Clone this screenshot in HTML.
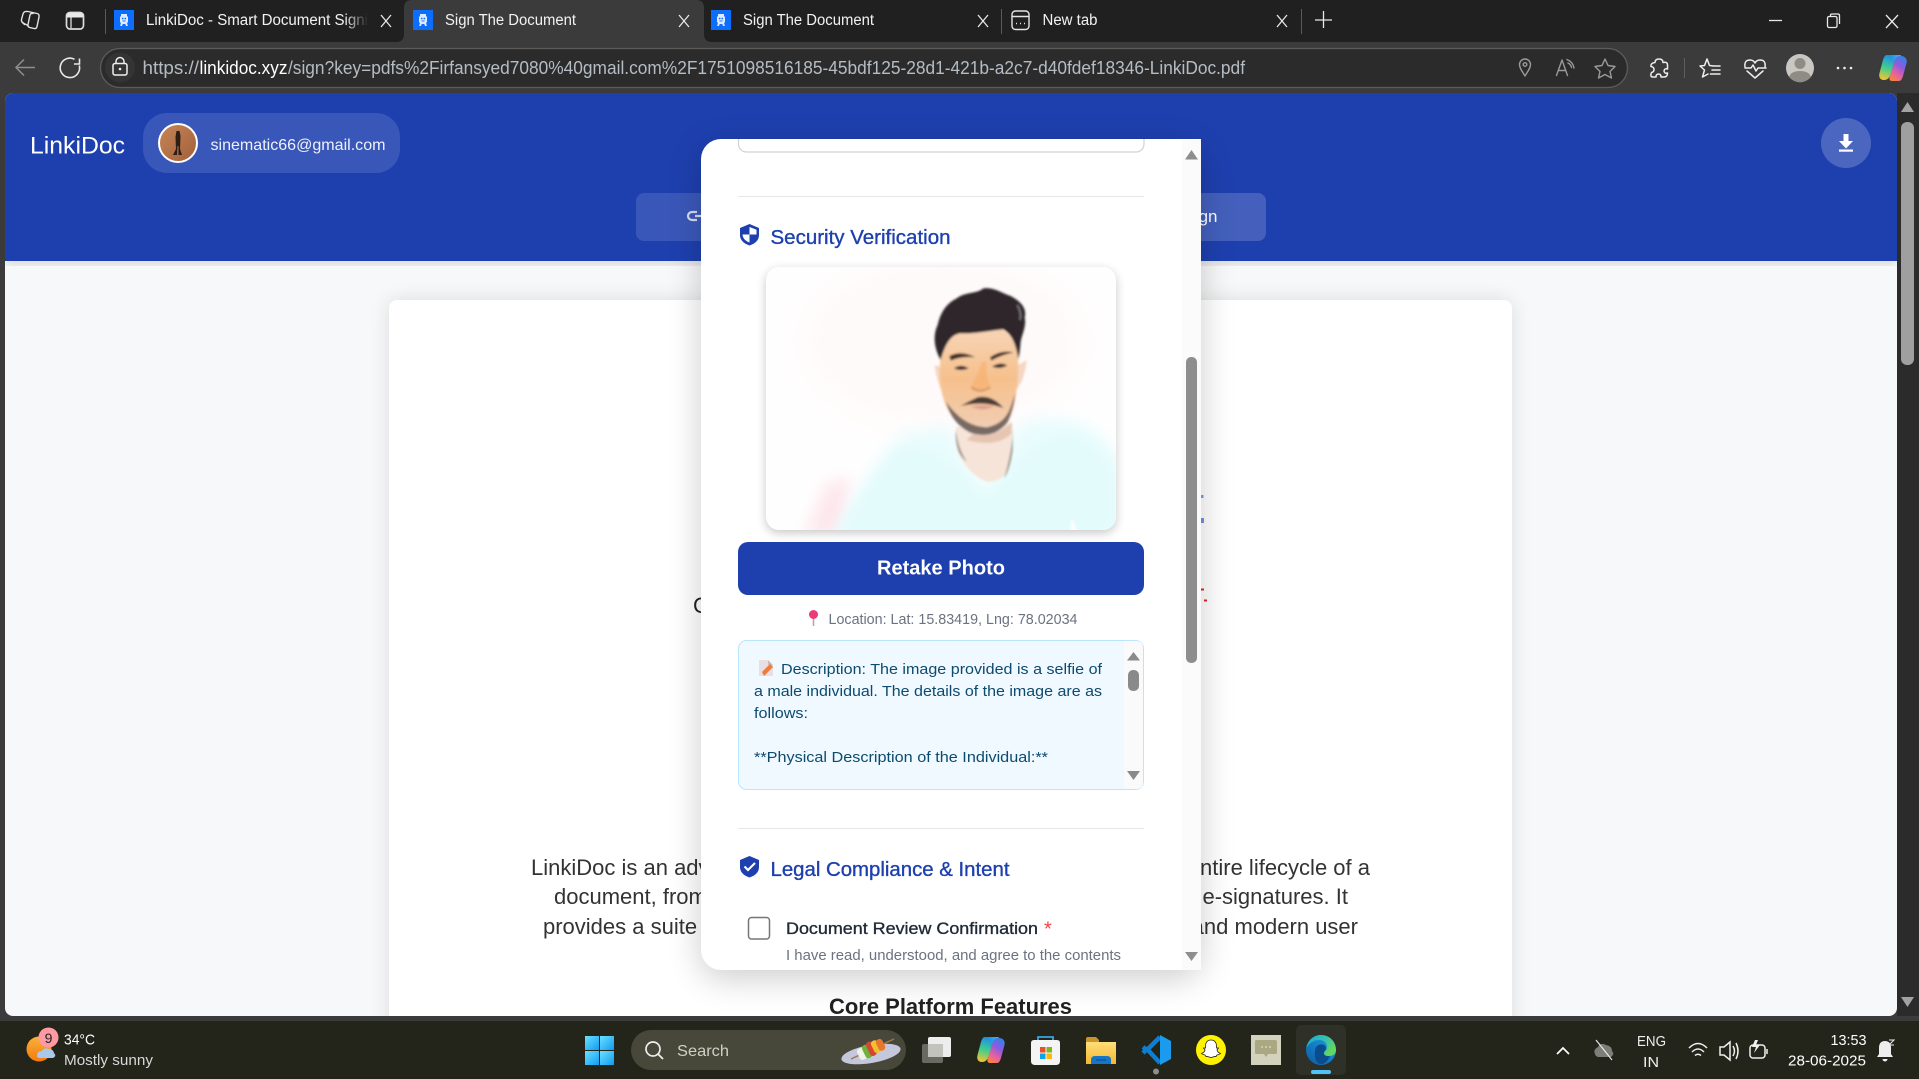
<!DOCTYPE html>
<html lang="en"><head><meta charset="utf-8"><title>Sign The Document</title>
<style>
html,body{margin:0;padding:0;width:1919px;height:1079px;background:#202020;overflow:hidden}
svg{display:block}
text{font-family:"Liberation Sans",Arial,sans-serif;white-space:pre}
.ic{fill:none;stroke:#e4e4e4;stroke-width:1.4;stroke-linecap:round;stroke-linejoin:round}
.tab{font-size:15.5px;fill:#f2f2f2}
.mid{stroke-width:.35px}
</style></head><body>
<svg width="1919" height="1079" viewBox="0 0 1919 1079" xmlns="http://www.w3.org/2000/svg">
<defs>
<filter id="b25" x="-30%" y="-30%" width="160%" height="160%"><feGaussianBlur stdDeviation="17"/></filter>
<filter id="b6" x="-10%" y="-10%" width="120%" height="120%"><feGaussianBlur stdDeviation="5"/></filter>
<filter id="b1" x="-10%" y="-10%" width="120%" height="120%"><feGaussianBlur stdDeviation="3"/></filter>
<filter id="b8" x="-30%" y="-30%" width="160%" height="160%"><feGaussianBlur stdDeviation="10"/></filter>
<filter id="b12" x="-30%" y="-30%" width="160%" height="160%"><feGaussianBlur stdDeviation="14"/></filter>
<filter id="b22" x="-50%" y="-50%" width="200%" height="200%"><feGaussianBlur stdDeviation="24"/></filter>
<filter id="b50" x="-40%" y="-40%" width="180%" height="180%"><feGaussianBlur stdDeviation="60"/></filter>
<clipPath id="page"><rect x="5" y="93" width="1892" height="923" rx="8"/></clipPath>
<clipPath id="photo"><rect x="766" y="267" width="350" height="263" rx="13"/></clipPath>
<linearGradient id="fade" gradientUnits="userSpaceOnUse" x1="345" x2="368" y1="0" y2="0"><stop offset="0" stop-color="#f2f2f2"/><stop offset="1" stop-color="#f2f2f2" stop-opacity="0"/></linearGradient>
<linearGradient id="cpA" x1=".5" y1="0" x2=".3" y2="1"><stop offset="0" stop-color="#1f8fe8"/><stop offset=".5" stop-color="#3fce8e"/><stop offset="1" stop-color="#f5c531"/></linearGradient>
<linearGradient id="cpB" x1=".7" y1="0" x2=".2" y2="1"><stop offset="0" stop-color="#3a7fe8"/><stop offset=".35" stop-color="#8a5be0"/><stop offset=".7" stop-color="#e9609f"/><stop offset="1" stop-color="#f7853b"/></linearGradient>
<linearGradient id="cpC" x1="0" y1="0" x2="1" y2="0"><stop offset="0" stop-color="#1a80e0"/><stop offset="1" stop-color="#39bdf0"/></linearGradient>
<linearGradient id="edgeA" x1="0" y1="1" x2=".8" y2="0"><stop offset="0" stop-color="#0c59a4"/><stop offset="1" stop-color="#1b9de2"/></linearGradient>
<linearGradient id="edgeB" x1="0" y1="0" x2="1" y2=".6"><stop offset="0" stop-color="#1ba5d8"/><stop offset=".55" stop-color="#35c1b0"/><stop offset="1" stop-color="#66d75c"/></linearGradient>
<linearGradient id="start" x1="0" y1="0" x2="1" y2="1"><stop offset="0" stop-color="#6ce0ff"/><stop offset="1" stop-color="#0f9cf0"/></linearGradient>
<linearGradient id="sun" x1="0" y1="0" x2="0" y2="1"><stop offset="0" stop-color="#f9b13a"/><stop offset="1" stop-color="#f47a10"/></linearGradient>
<linearGradient id="fold" x1="0" y1="0" x2="0" y2="1"><stop offset="0" stop-color="#ffdf7a"/><stop offset="1" stop-color="#f6b52c"/></linearGradient>
<linearGradient id="avatar" x1="0" y1="0" x2="1" y2="1"><stop offset="0" stop-color="#c78658"/><stop offset="1" stop-color="#a15f3a"/></linearGradient>
<linearGradient id="skin" x1="0" y1="0" x2="0" y2="1"><stop offset="0" stop-color="#f8d6ba"/><stop offset=".5" stop-color="#f6c08c"/><stop offset="1" stop-color="#f1cfb8"/></linearGradient>
<linearGradient id="btn" x1="0" y1="0" x2="1" y2="0"><stop offset="0" stop-color="#fff" stop-opacity=".12"/><stop offset="1" stop-color="#fff" stop-opacity=".17"/></linearGradient>
<g id="fav"><rect width="20" height="20" fill="#0d6efd"/><path d="M7 4h6v2.500h1v6h-1l.8 3.500h-1.800l-.7-2H8.700L8 16H6.200L7 12.500H6v-6h1z" fill="#dfeaff"/><circle cx="8.700" cy="8.500" r=".9" fill="#0d6efd"/><circle cx="11.300" cy="8.500" r=".9" fill="#0d6efd"/><rect x="8.500" y="10.500" width="3" height=".9" fill="#0d6efd"/></g>
<g id="x"><path d="M-5 -6 5 6M5 -6 -5 6" stroke="#e8e8e8" stroke-width="1.300" fill="none"/></g>
<g id="copilot">
<path d="M8 0H14C17 0 17 3 16 5L12 18C11 22 9 25 5 25C1 25 -.5 22 .5 18L4 5C5 2 6 0 8 0Z" fill="url(#cpA)"/>
<path d="M20 26H13C10 26 10 23 11 21L15 8C16 4 18 1 22 1C26 1 28.500 4 27.500 8L24 21C23 24 22 26 20 26Z" fill="url(#cpB)"/>
<path d="M8 0H20C21.500 0 22.500 .5 22 1C18 1 16 4 15 8L13.500 9.500C15 5 13 1.500 8 0Z" fill="url(#cpC)"/>
</g>
</defs>

<!-- window chrome -->
<rect width="1919" height="42" fill="#202020"/>
<rect y="42" width="1919" height="980" fill="#3b3b3b"/>
<path d="M396 42Q404 42 404 34V8Q404 0 412 0H696Q704 0 704 8V34Q704 42 712 42Z" fill="#3b3b3b"/>

<!-- tab strip icons -->
<g class="ic" stroke-width="1.500">
<path d="M28 11.500 37 13.500Q39.500 14 39 17L37 26.500Q36.500 29 34 28.500L30 27.600Q27.500 27 28 24.500L30 15Q30.500 13 33 13.500"/>
<path d="M28 25.500 24 23.500Q21 22 21.500 19.500L23 14Q24 11 27 11.500"/>
<path d="M24.500 24.500 22.500 22.500"/>
<rect x="66.500" y="12.500" width="17" height="16.500" rx="3.500" stroke="#dcdcdc" stroke-width="1.700"/>
</g>
<path d="M67 16Q67 13 70 13H80Q83 13 83 16V17.500H67Z" fill="#e8e8e8"/>
<path d="M71 17.500V28" stroke="#dcdcdc" stroke-width="1.300"/>
<path d="M105.500 9V34" stroke="#5a5a5a"/>

<use href="#fav" x="114" y="10"/>
<text class="tab" x="146" y="25" textLength="222" lengthAdjust="spacingAndGlyphs" style="fill:url(#fade)">LinkiDoc - Smart Document Signi</text>
<use href="#x" x="386" y="21"/>
<use href="#fav" x="413" y="10"/>
<text class="tab" x="445" y="25" textLength="131" lengthAdjust="spacingAndGlyphs">Sign The Document</text>
<use href="#x" x="684" y="21"/>
<use href="#fav" x="711" y="10"/>
<text class="tab" x="743" y="25" textLength="131" lengthAdjust="spacingAndGlyphs">Sign The Document</text>
<use href="#x" x="983" y="21"/>
<path d="M1001.500 9V34" stroke="#5a5a5a"/>
<rect x="1012" y="11" width="17" height="18.500" rx="3.500" class="ic"/>
<path d="M1012 16.500H1029" class="ic"/>
<path d="M1016 23.500H1017M1020 23.500H1021M1024 23.500H1025" stroke="#e4e4e4" stroke-width="1.600"/>
<text class="tab" x="1042.500" y="25" textLength="55" lengthAdjust="spacingAndGlyphs">New tab</text>
<use href="#x" x="1282" y="21"/>
<path d="M1301.500 9V34" stroke="#5a5a5a"/>
<path d="M1323.500 11V28M1315 20H1332" stroke="#e8e8e8" stroke-width="1.300"/>
<path d="M1769 20.500H1782" stroke="#e8e8e8" stroke-width="1.300"/>
<rect x="1827.500" y="16.500" width="9.500" height="11" rx="1.500" fill="none" stroke="#e8e8e8" stroke-width="1.300"/>
<path d="M1830.500 16V15Q1830.500 14 1832 14H1838Q1839.500 14 1839.500 15.500V24" fill="none" stroke="#e8e8e8" stroke-width="1.300"/>
<path d="M1886 15 1898 28M1898 15 1886 28" stroke="#e8e8e8" stroke-width="1.300"/>

<!-- toolbar -->
<path d="M35 67.500H16M24 59.500 16 67.500 24 75.500" fill="none" stroke="#8e8e8e" stroke-width="1.500"/>
<path d="M79.300 65.500A9.700 9.700 0 1 1 74.500 59.300" fill="none" stroke="#e8e8e8" stroke-width="1.600"/>
<path d="M79.500 58.500V64H74" fill="none" stroke="#e8e8e8" stroke-width="1.600"/>
<rect x="100.500" y="48.500" width="1527" height="39" rx="19.500" fill="#2b2b2b" stroke="#5c5c5c" stroke-width="1.300"/>
<circle cx="120" cy="67.500" r="15" fill="#343434"/>
<rect x="113" y="63.500" width="14" height="11.500" rx="2" fill="none" stroke="#eee" stroke-width="1.500"/>
<path d="M116 63.500V61.500A4 4 0 0 1 124 61.500V63.500" fill="none" stroke="#eee" stroke-width="1.500"/>
<circle cx="120" cy="69" r="1.300" fill="#eee"/>
<text x="142.500" y="74" font-size="18" fill="#b5bcc4" textLength="56.500" lengthAdjust="spacingAndGlyphs">https://</text>
<text x="199.500" y="74" font-size="18" fill="#fff" textLength="88" lengthAdjust="spacingAndGlyphs">linkidoc.xyz</text>
<text x="288" y="74" font-size="18" fill="#b5bcc4" textLength="957" lengthAdjust="spacingAndGlyphs">/sign?key=pdfs%2Firfansyed7080%40gmail.com%2F1751098516185-45bdf125-28d1-421b-a2c7-d40fdef18346-LinkiDoc.pdf</text>

<g fill="none" stroke="#9a9a9a" stroke-width="1.400" stroke-linejoin="round" stroke-linecap="round">
<path d="M1525 76C1522 71 1519.500 68 1519.500 64.500A5.500 5.500 0 0 1 1530.500 64.500C1530.500 68 1528 71 1525 76Z"/><circle cx="1525" cy="64.500" r="1.800"/>
<path d="M1556.500 75.500 1562 60 1567.500 75.500M1558.500 70.500H1565.500"/><path d="M1567 59.500Q1573 62 1574 68M1568 63Q1571 64.500 1571.500 67.500"/>
<path d="M1605 59 1608 65.500 1615 66.500 1610 71.500 1611.500 78 1605 74.500 1598.500 78 1600 71.500 1595 66.500 1602 65.500Z"/>
</g>
<g fill="none" stroke="#ededed" stroke-width="1.500" stroke-linejoin="round" stroke-linecap="round">
<path d="M1655 62.500Q1655 59 1659 59Q1663 59 1663 62.500Q1667.500 61.500 1667.500 65V69Q1664.500 68 1664 71Q1664.500 74 1667.500 73Q1667.500 77 1664 77H1661Q1661 74 1658.500 74Q1656 74 1656 77H1652Q1650 76 1651.500 72.500Q1654 72 1654 69.500Q1654 67 1651 66.500Q1650.500 63 1655 62.500Z"/>
<path d="M1707 59 1709.500 65.500 1714 66M1700 66 1704.500 65.500 1707 59M1700 66 1704.500 70 1702.500 77 1708 74M1713 66H1720M1712 70H1720M1710.500 74H1720"/>
<path d="M1745 67Q1744 60 1750 60Q1753.500 60 1755 63Q1756.500 60 1760 60Q1766 60 1765 67M1747 71 1755 78 1763 71M1745 68H1751L1753 65 1756 71 1758 68H1766"/>
</g>
<path d="M1684.500 58V78" stroke="#5e5e5e"/>
<circle cx="1800" cy="68" r="14" fill="#c9c7c2"/>
<circle cx="1800" cy="63.500" r="5.500" fill="#8f8c86"/>
<path d="M1789 77Q1791 71 1800 71Q1809 71 1811 77A14 14 0 0 1 1789 77Z" fill="#8f8c86"/>
<circle cx="1838" cy="68" r="1.300" fill="#eee"/><circle cx="1844.500" cy="68" r="1.300" fill="#eee"/><circle cx="1851" cy="68" r="1.300" fill="#eee"/>
<use href="#copilot" x="1879" y="55"/>

<!-- page -->
<g clip-path="url(#page)">
<rect x="5" y="93" width="1892" height="923" fill="#f7f8f9"/>
<rect x="5" y="255" width="1892" height="10" fill="#000" opacity=".12" filter="url(#b6)"/>
<rect x="389" y="300" width="1123" height="760" rx="8" fill="#000" opacity=".11" filter="url(#b8)"/>
<rect x="389" y="300" width="1123" height="760" rx="8" fill="#fff"/>

<text x="693" y="613" font-size="22" fill="#222">Certificate</text>
<rect x="1201" y="588.500" width="3" height="2" fill="#ef2020"/><rect x="1204" y="599.500" width="3" height="2" fill="#ef2020"/>
<rect x="1201" y="495" width="2.500" height="3" fill="#7f9fe3"/><rect x="1201" y="518" width="3" height="5" fill="#6f95df"/>

<g font-size="22" fill="#333">
<text x="531" y="875">LinkiDoc is an advanced</text>
<text x="554" y="904">document, from creation</text>
<text x="543" y="934">provides a suite of</text>
<text x="1370" y="875" text-anchor="end">the entire lifecycle of a</text>
<text x="1348" y="904" text-anchor="end">and e-signatures. It</text>
<text x="1358" y="934" text-anchor="end">and modern user</text>
</g>
<text x="829" y="1014" font-size="22" font-weight="700" fill="#222" textLength="243" lengthAdjust="spacingAndGlyphs">Core Platform Features</text>

<!-- header -->
<rect x="5" y="93" width="1892" height="168" fill="#1e40af"/>
<text x="30" y="153.500" font-size="24" fill="#fff" textLength="95" lengthAdjust="spacingAndGlyphs">LinkiDoc</text>
<rect x="143" y="113" width="257" height="60" rx="24" fill="#fff" opacity=".12"/>
<circle cx="178" cy="143" r="19" fill="url(#avatar)" stroke="#fff" stroke-width="2"/>
<path d="M176.500 131H179.500L180.500 136 180 149 182 155H178.500V146H177.500L177 155H173L176 149 175.500 137Z" fill="#2c1d16"/>
<text x="210.500" y="150" font-size="16" fill="#eef1fb" textLength="175" lengthAdjust="spacingAndGlyphs">sinematic66@gmail.com</text>
<circle cx="1846" cy="143" r="25" fill="#fff" opacity=".2"/>
<path d="M1843.500 134H1848.500V141H1853L1846 148.500 1839 141H1843.500Z" fill="#fff"/><rect x="1839" y="149.500" width="14" height="2.200" fill="#fff"/>
<rect x="636" y="193" width="630" height="48" rx="8" fill="url(#btn)"/>
<path d="M697 212H692A4 4 0 0 0 692 220H697M695 216H702" fill="none" stroke="#d5dcf2" stroke-width="2.200"/>
<text x="1217.500" y="222" font-size="17" fill="#fff" text-anchor="end">Sign</text>

<!-- modal shadow -->
<rect x="701" y="147" width="500" height="831" rx="20" fill="#000" opacity=".2" filter="url(#b25)"/>
</g>

<!-- modal -->
<path d="M721 139H1201V970H721A20 20 0 0 1 701 950V159A20 20 0 0 1 721 139Z" fill="#fff"/>
<rect x="1182" y="140" width="19" height="830" fill="#fbfbfb"/>
<path d="M1191.500 150 1198 159.500H1185Z" fill="#8e8e8e"/>
<rect x="1186" y="357" width="11" height="306" rx="5" fill="#8e8e8e"/>
<path d="M1185 952H1198L1191.500 961Z" fill="#8e8e8e"/>

<path d="M738.500 139V144A8 8 0 0 0 746.500 152H1136A8 8 0 0 0 1144 144V139" fill="none" stroke="#cfd2d7" stroke-width="1.200"/>
<rect x="738" y="196" width="406" height="1" fill="#e5e7eb"/>

<path d="M749.500 224 759 228V235C759 240 755.500 243.500 749.500 245.500C743.500 243.500 740 240 740 235V228Z" fill="#1e40af"/>
<path d="M749.500 227 756.500 229.800V234.500H749.500ZM749.500 234.500V242.500C745.500 241 742.800 238.500 742.500 234.500Z" fill="#fff"/>
<text x="770.500" y="244" class="mid" font-size="20" fill="#1e40af" stroke="#1e40af" textLength="180" lengthAdjust="spacingAndGlyphs">Security Verification</text>

<!-- selfie -->
<rect x="766" y="270" width="350" height="263" rx="13" fill="#000" opacity=".22" filter="url(#b6)"/>
<rect x="766" y="267" width="350" height="263" rx="13" fill="#fffefe"/>
<g clip-path="url(#photo)"><g transform="translate(770 270) scale(.33333)">
<ellipse cx="520" cy="220" rx="420" ry="260" fill="#fff6f6" opacity=".55" filter="url(#b50)"/>
<path d="M100 800 170 640 240 620 220 800Z" fill="#fde6ec" filter="url(#b22)"/>
<path d="M190 810C240 700 310 570 390 500C440 475 520 470 555 478C570 540 590 600 640 640C690 645 710 620 725 500C740 450 800 440 900 450C980 470 1030 520 1060 600V810Z" fill="#e8fcfd" filter="url(#b22)"/>
<path d="M195 800C245 720 320 600 395 530C470 520 560 560 640 680C720 600 800 480 900 490C980 510 1020 560 1040 640V800Z" fill="#e4fbfc" filter="url(#b12)"/>
<g filter="url(#b1)">
<path d="M905 745 925 790H900Z" fill="#fff"/>
<path d="M558 470 728 462 715 590Q700 638 650 635Q590 612 562 540Z" fill="#f6e4d8"/>
<path d="M610 490Q680 505 725 455V490Q680 535 590 510Z" fill="#e6c6b2"/>
<path d="M558 478Q562 530 590 575Q575 565 566 545Q554 510 558 478ZM728 470Q726 550 702 625Q720 600 728 540Z" fill="#9d948e"/>
<path d="M494 285 518 292 522 375Q500 340 494 285ZM770 270 745 285 738 360Q765 330 770 270Z" fill="#f6d6c2"/>
<path d="M510 280C505 350 520 410 555 450C590 495 680 505 715 455C735 420 745 340 745 280C745 220 720 165 640 165C550 165 515 220 510 280Z" fill="url(#skin)"/>
<path d="M635 275Q622 320 600 355Q625 378 665 355Q645 320 650 275Z" fill="#f6a862" opacity=".45"/>
<path d="M605 352Q630 372 660 352" fill="none" stroke="#c98a60" stroke-width="4"/>
<path d="M528 395Q545 460 600 488Q670 510 712 458Q730 420 736 370L722 410Q705 462 650 472Q580 470 528 395Z" fill="#635856" opacity=".85"/>
<path d="M572 408Q595 394 622 382Q640 378 660 384Q685 394 700 414Q665 402 635 401Q600 401 572 408Z" fill="#4b3a34"/>
<path d="M602 410Q640 402 672 410Q640 426 602 410Z" fill="#dd9f90"/>
<path d="M538 258Q575 240 615 262Q575 258 542 272ZM660 262Q695 238 730 248Q695 254 664 272Z" fill="#3f2e28"/>
<path d="M552 295Q572 280 596 295Q572 305 552 295ZM666 290Q690 274 712 286Q690 299 666 290Z" fill="#34272a"/>
<path d="M512 270C492 235 488 195 503 165C512 125 530 100 560 85C585 65 620 72 640 55C672 50 700 72 722 78C748 92 772 112 764 142C770 168 756 192 752 215C750 240 748 255 745 268C738 225 728 195 700 178C660 182 610 192 570 190C540 195 525 225 512 270Z" fill="#2f282b"/>
<path d="M742 105Q756 130 750 150" stroke="#8b8488" stroke-width="4" fill="none"/>
</g>
</g></g>

<rect x="738" y="542" width="406" height="53" rx="10" fill="#1e40af"/>
<text x="877" y="574.500" font-size="20" font-weight="700" fill="#fff" textLength="128" lengthAdjust="spacingAndGlyphs">Retake Photo</text>

<path d="M813.500 618V626" stroke="#b3a9ad" stroke-width="1.600"/>
<circle cx="813.500" cy="614.500" r="4.500" fill="#ec3b76"/>
<path d="M809.500 612 813.500 619 817.500 612Z" fill="#ec3b76"/>
<text x="828.500" y="624" font-size="14.500" fill="#6b7280" textLength="249" lengthAdjust="spacingAndGlyphs">Location: Lat: 15.83419, Lng: 78.02034</text>

<rect x="738.500" y="640.500" width="405" height="149" rx="8" fill="#f0f9ff" stroke="#bae6fd"/>
<path d="M1124 641H1136Q1143 641 1143 648V782Q1143 789 1136 789H1124Z" fill="#fafafa"/>
<path d="M1133.500 652 1140 660.500H1127Z" fill="#8a8a8a"/>
<rect x="1128" y="670" width="11" height="21" rx="5" fill="#8a8a8a"/>
<path d="M1127 771H1140L1133.500 780Z" fill="#8a8a8a"/>

<path d="M759 660H768L773 665V676H759Z" fill="#e9dfe2"/>
<path d="M768 660V665H773Z" fill="#c9bcc0"/>
<path d="M764 676 762 672 770 664 773 667Z" fill="#ef7a3a"/>
<g font-size="15" fill="#0c4a6e">
<text x="781" y="674" textLength="321" lengthAdjust="spacingAndGlyphs">Description: The image provided is a selfie of</text>
<text x="754" y="696" textLength="348" lengthAdjust="spacingAndGlyphs">a male individual. The details of the image are as</text>
<text x="754" y="718" textLength="54" lengthAdjust="spacingAndGlyphs">follows:</text>
<text x="754" y="762" textLength="294" lengthAdjust="spacingAndGlyphs">**Physical Description of the Individual:**</text>
</g>

<rect x="738" y="828" width="406" height="1" fill="#e5e7eb"/>
<path d="M749.500 856 759 860V867C759 872 755.500 875.500 749.500 877.500C743.500 875.500 740 872 740 867V860Z" fill="#1e40af"/>
<path d="M744.500 866.500 748 870 755 863" fill="none" stroke="#fff" stroke-width="2.100"/>
<text x="770.500" y="876" class="mid" font-size="20" fill="#1e40af" stroke="#1e40af" textLength="239" lengthAdjust="spacingAndGlyphs">Legal Compliance &amp; Intent</text>
<rect x="748.500" y="917.500" width="21" height="21.500" rx="3" fill="#fff" stroke="#767676" stroke-width="1.500"/>
<text x="786" y="934" class="mid" font-size="17" fill="#1f2937" stroke="#1f2937" textLength="252" lengthAdjust="spacingAndGlyphs">Document Review Confirmation</text>
<text x="1044" y="935.500" font-size="20" fill="#ef4444">*</text>
<text x="786" y="960" font-size="14.500" fill="#6b7280" textLength="335" lengthAdjust="spacingAndGlyphs">I have read, understood, and agree to the contents</text>

<!-- page scrollbar -->
<rect x="1897" y="93" width="22" height="923" fill="#2b2b2b"/>
<path d="M1907.500 102 1914 112H1901Z" fill="#a3a3a3"/>
<rect x="1901" y="122" width="13" height="243" rx="6" fill="#9f9f9f"/>
<path d="M1901 997H1914L1907.500 1007Z" fill="#a3a3a3"/>

<!-- taskbar -->
<rect y="1021" width="1919" height="58" fill="#23241a"/>
<circle cx="39" cy="1049" r="12.500" fill="url(#sun)"/>
<path d="M37 1056Q37 1051 42 1051Q44 1047 49 1049Q53 1049 54 1053Q57 1056 53 1058H40Q37 1058 37 1056Z" fill="#a9c9ea"/>
<circle cx="48.500" cy="1037.500" r="10" fill="#ff9aa2"/>
<text x="48.500" y="1043" font-size="14" fill="#222" text-anchor="middle">9</text>
<text x="64" y="1044.500" font-size="14.500" fill="#fff" textLength="31" lengthAdjust="spacingAndGlyphs">34°C</text>
<text x="64" y="1065" font-size="14.500" fill="#d8d8d8" textLength="89" lengthAdjust="spacingAndGlyphs">Mostly sunny</text>

<g fill="url(#start)"><rect x="585" y="1036" width="14" height="14"/><rect x="600" y="1036" width="14" height="14"/><rect x="585" y="1051" width="14" height="14"/><rect x="600" y="1051" width="14" height="14"/></g>

<rect x="631" y="1030" width="275" height="40" rx="20" fill="#48483a"/>
<circle cx="653" cy="1049" r="7" fill="none" stroke="#eee" stroke-width="1.700"/><path d="M658 1054 663 1059" stroke="#eee" stroke-width="1.800"/>
<text x="677" y="1056" font-size="16" fill="#d0d0c8" textLength="52" lengthAdjust="spacingAndGlyphs">Search</text>
<ellipse cx="871" cy="1054" rx="30" ry="9" transform="rotate(-10 871 1054)" fill="#c5c7dd"/>
<path d="M851 1059 894 1039" stroke="#9b7a50" stroke-width="1.500"/>
<g transform="rotate(-26 872 1049)"><rect x="857" y="1043" width="8" height="12" rx="3" fill="#f2f2e6"/><rect x="863" y="1042" width="7" height="14" rx="3" fill="#6cb23f"/><rect x="868" y="1041" width="7" height="15" rx="3" fill="#d8452f"/><rect x="873" y="1042" width="7" height="13" rx="3" fill="#f0c033"/><rect x="878" y="1043" width="7" height="12" rx="3" fill="#e8772a"/></g>

<rect x="922" y="1044" width="21" height="19" rx="2" fill="#6a6a62"/>
<rect x="928" y="1037" width="23" height="20" rx="2" fill="#fff" opacity=".92"/>
<rect x="928" y="1044" width="15" height="13" fill="#c3c3bd"/>

<use href="#copilot" x="977" y="1037"/>

<path d="M1038 1040V1037H1053V1040" fill="none" stroke="#33a7e8" stroke-width="1.800"/>
<path d="M1031 1043Q1031 1040 1034 1040H1057Q1060 1040 1060 1043V1061Q1060 1065 1056 1065H1035Q1031 1065 1031 1061Z" fill="#f4f4f4"/>
<rect x="1040" y="1047" width="5.500" height="5.500" fill="#ea4e2a"/><rect x="1046.500" y="1047" width="5.500" height="5.500" fill="#7bb81f"/><rect x="1040" y="1053.500" width="5.500" height="5.500" fill="#0da3e8"/><rect x="1046.500" y="1053.500" width="5.500" height="5.500" fill="#fdb70c"/>

<path d="M1086 1039Q1086 1037 1088 1037H1096L1099 1040V1043H1086Z" fill="#c9952a"/>
<path d="M1086 1064V1042H1116V1064Z" fill="url(#fold)"/>
<path d="M1091 1060Q1091 1056 1095 1056H1107Q1111 1056 1111 1060V1064H1091Z" fill="#1576c7"/><path d="M1096 1060H1106" stroke="#0c4f90" stroke-width="1.200"/>

<path d="M1160 1037 1147 1050 1143 1047M1160 1063 1147 1049 1143 1053" fill="none" stroke="#0e7fd0" stroke-width="4.500" stroke-linejoin="round"/>
<path d="M1160 1035 1171 1041V1059L1160 1065Z" fill="#1a9bee"/>
<circle cx="1156" cy="1071.500" r="3" fill="#8e8e8e"/>

<circle cx="1211" cy="1050" r="15" fill="#fff200"/>
<path d="M1211 1040C1207 1040 1205.500 1043 1205.500 1046V1048L1203.500 1048 1205 1050C1204.500 1052 1203 1053 1201.500 1053.500C1202.500 1054.500 1204 1054.500 1205 1055L1206 1056.500C1208 1056 1209 1057.500 1211 1057.500C1213 1057.500 1214 1056 1216 1056.500L1217 1055C1218 1054.500 1219.500 1054.500 1220.500 1053.500C1219 1053 1217.500 1052 1217 1050L1218.500 1048 1216.500 1048V1046C1216.500 1043 1215 1040 1211 1040Z" fill="#fff" stroke="#222" stroke-width=".8"/>

<rect x="1251" y="1035" width="30" height="30" fill="#d3d2bc"/>
<path d="M1255 1041Q1255 1040 1257 1040H1275Q1277 1040 1277 1042V1053Q1277 1054 1275 1054H1268L1266 1057 1264 1054H1257Q1255 1054 1255 1053Z" fill="#a9a883"/>
<circle cx="1262" cy="1047" r="1" fill="#d3d2bc"/><circle cx="1266" cy="1047" r="1" fill="#d3d2bc"/><circle cx="1270" cy="1047" r="1" fill="#d3d2bc"/>

<rect x="1296" y="1025" width="50" height="50" rx="5" fill="#2f3027"/>
<g transform="translate(1306 1035)">
<circle cx="15" cy="15" r="15" fill="url(#edgeA)"/>
<path d="M15 0C24 0 30 7 30 15C30 19 27 21 23 21C20 21 18 20 18 18C18 16 21 16 21 12C21 8 18 5 13 5C8 5 3 8 .3 13C2 5 8 0 15 0Z" fill="url(#edgeB)"/>
<path d="M9 16C9 11 14 8 18 10C21 12 20 15 18 17C17 20 20 22 24 21C22 26 18 30 14 29C10 28 8 22 9 16Z" fill="#0b4d8c"/>
</g>
<rect x="1311" y="1070" width="20" height="4" rx="2" fill="#4fc3f7"/>

<path d="M1557 1054 1563 1048 1569 1054" fill="none" stroke="#fff" stroke-width="1.700"/>
<path d="M1596 1056Q1592 1050 1598 1047Q1600 1042 1606 1045Q1612 1046 1612 1051Q1615 1054 1611 1057H1598Z" fill="#7e7e78"/>
<path d="M1596 1040 1612 1060" stroke="#eee" stroke-width="1.100"/>
<text x="1637" y="1046" font-size="14.500" fill="#eee" textLength="29" lengthAdjust="spacingAndGlyphs">ENG</text>
<text x="1643" y="1067" font-size="14.500" fill="#eee" textLength="16" lengthAdjust="spacingAndGlyphs">IN</text>
<g fill="none" stroke="#f0f0f0" stroke-width="1.500">
<path d="M1689 1048Q1698 1039 1707 1048M1692 1052Q1698 1046 1704 1052M1695 1055.500Q1698 1053 1701 1055.500"/>
<path d="M1720 1047H1724L1730 1042V1060L1724 1055H1720Z"/><path d="M1733 1046Q1736 1051 1733 1056M1736 1043Q1740 1051 1736 1059"/>
<rect x="1750" y="1045" width="15" height="13" rx="3"/><path d="M1767 1049V1054"/>
</g>
<path d="M1755 1040 1752 1047H1756L1754 1053 1760 1045H1756L1758 1040Z" fill="#f0f0f0"/>
<text x="1830.500" y="1045" font-size="14.500" fill="#fff" textLength="36" lengthAdjust="spacingAndGlyphs">13:53</text>
<text x="1788" y="1065.500" font-size="14.500" fill="#fff" textLength="78" lengthAdjust="spacingAndGlyphs">28-06-2025</text>
<path d="M1885 1041Q1879 1041 1879 1048V1054L1877 1057H1893L1891 1054V1048Q1891 1041 1885 1041Z" fill="#eee"/>
<path d="M1882.500 1059A2.500 2.500 0 0 0 1887.500 1059Z" fill="#eee"/>
<path d="M1886 1038H1893" stroke="#23241a" stroke-width="2"/><path d="M1889 1040 1894 1040 1889 1045 1894 1045" fill="none" stroke="#eee" stroke-width="1"/>
</svg>
</body></html>
